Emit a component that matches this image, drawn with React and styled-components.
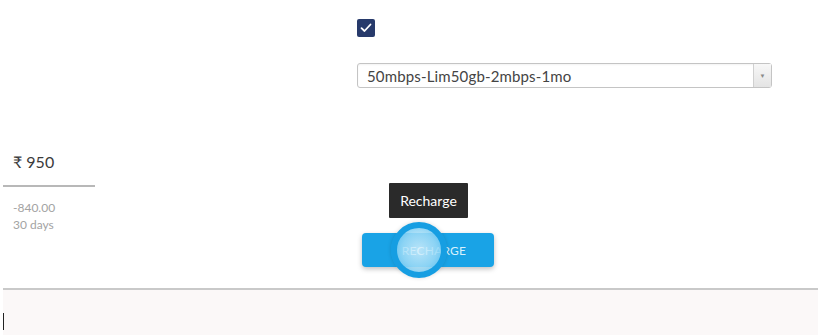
import styled, { createGlobalStyle } from "styled-components";

const GlobalStyle = createGlobalStyle`
  body {
    margin: 0;
    background: #fff;
    font-family: "Lato", "Noto Sans", sans-serif;
    color: #333;
  }
`;

const Page = styled.div`
  width: 824px;
  height: 335px;
  display: flex;
  flex-direction: column;
  overflow: hidden;
`;

const OptionsBlock = styled.div`
  display: flex;
  flex-direction: column;
  padding: 19px 0 0 357px;
  gap: 26px;
`;

const CheckBox = styled.span`
  width: 18px;
  height: 18px;
  border-radius: 2px;
  background: #273a6b;
  display: flex;
  align-items: center;
  justify-content: center;
`;

const Select = styled.div`
  width: 413px;
  height: 23px;
  border: 1px solid #c4c4c4;
  border-radius: 3px;
  display: flex;
  align-items: center;
  box-shadow: inset 0 1px 2px rgba(0, 0, 0, 0.05);
`;

const SelectText = styled.span`
  flex: 1;
  padding-left: 9px;
  font-size: 15px;
  color: #444;
  letter-spacing: 0.15px;
`;

const SelectArrow = styled.span`
  width: 17px;
  height: 100%;
  border-left: 1px solid #d0d0d0;
  background: linear-gradient(#f7f7f7, #e4e4e4);
  display: flex;
  align-items: center;
  justify-content: center;
  font-size: 6px;
  color: #888;
`;

const PlanRow = styled.div`
  display: grid;
  grid-template-columns: 92px 1fr;
  column-gap: 267px;
  padding: 62px 0 0 3px;
  height: 138px;
`;

const PriceCard = styled.div`
  display: flex;
  flex-direction: column;
`;

const Price = styled.div`
  padding-left: 10px;
  font-size: 16px;
  color: #3b3b3b;
  height: 35px;
  line-height: 24px;
  border-bottom: 2px solid #b8b8b8;
`;

const Notes = styled.div`
  margin-top: 12px;
  padding-left: 10px;
  font-size: 12px;
  color: #a3a3a3;
  line-height: 17px;
`;

const ButtonWrap = styled.div`
  position: relative;
  width: 132px;
  margin-top: 83px;
  height: 34px;
`;

const Tooltip = styled.div`
  position: absolute;
  left: 27px;
  bottom: 49px;
  width: 79px;
  height: 35px;
  background: #2a2a2a;
  color: #fff;
  font-size: 14px;
  display: flex;
  align-items: center;
  justify-content: center;
  border-radius: 1px;
  z-index: 2;
`;

const RechargeButton = styled.button`
  width: 132px;
  height: 34px;
  border: none;
  border-radius: 4px;
  background: #19a3e6;
  color: #d8f1fd;
  font-family: "Lato", sans-serif;
  font-size: 12px;
  letter-spacing: 0.2px;
  padding-left: 18px;
  box-shadow: 0 2px 5px rgba(0, 0, 0, 0.25);
  position: relative;
  overflow: visible;
`;

const Ripple = styled.span`
  position: absolute;
  left: 29px;
  top: -11px;
  width: 44px;
  height: 44px;
  border-radius: 50%;
  border: 6px solid #169ee2;
  background: radial-gradient(circle, rgba(225, 244, 253, 0.8) 0%, rgba(160, 220, 247, 0.85) 55%, rgba(85, 188, 238, 0.95) 100%);
  box-shadow: 0 0 4px rgba(0, 0, 0, 0.15);
`;

const Footer = styled.div`
  margin: 0 6px 0 3px;
  flex: 1;
  border-top: 2px solid #c9c9c9;
  background: #fbf8f8;
  padding-top: 23px;
`;

const Caret = styled.span`
  display: block;
  width: 1px;
  height: 17px;
  background: #222;
`;

export default function App() {
  return (
    <>
      <GlobalStyle />
      <Page>
        <OptionsBlock>
          <CheckBox>
            <svg width="12" height="10" viewBox="0 0 12 10">
              <path d="M1.5 5.2 L4.5 8 L10.5 1.5" fill="none" stroke="#fff" strokeWidth="1.8" strokeLinecap="round" strokeLinejoin="round" />
            </svg>
          </CheckBox>
          <Select>
            <SelectText>50mbps-Lim50gb-2mbps-1mo</SelectText>
            <SelectArrow>▼</SelectArrow>
          </Select>
        </OptionsBlock>
        <PlanRow>
          <PriceCard>
            <Price>₹ 950</Price>
            <Notes>
              <div>-840.00</div>
              <div>30 days</div>
            </Notes>
          </PriceCard>
          <ButtonWrap>
            <Tooltip>Recharge</Tooltip>
            <RechargeButton>
              RECHARGE
              <Ripple />
            </RechargeButton>
          </ButtonWrap>
        </PlanRow>
        <Footer>
          <Caret />
        </Footer>
      </Page>
    </>
  );
}
